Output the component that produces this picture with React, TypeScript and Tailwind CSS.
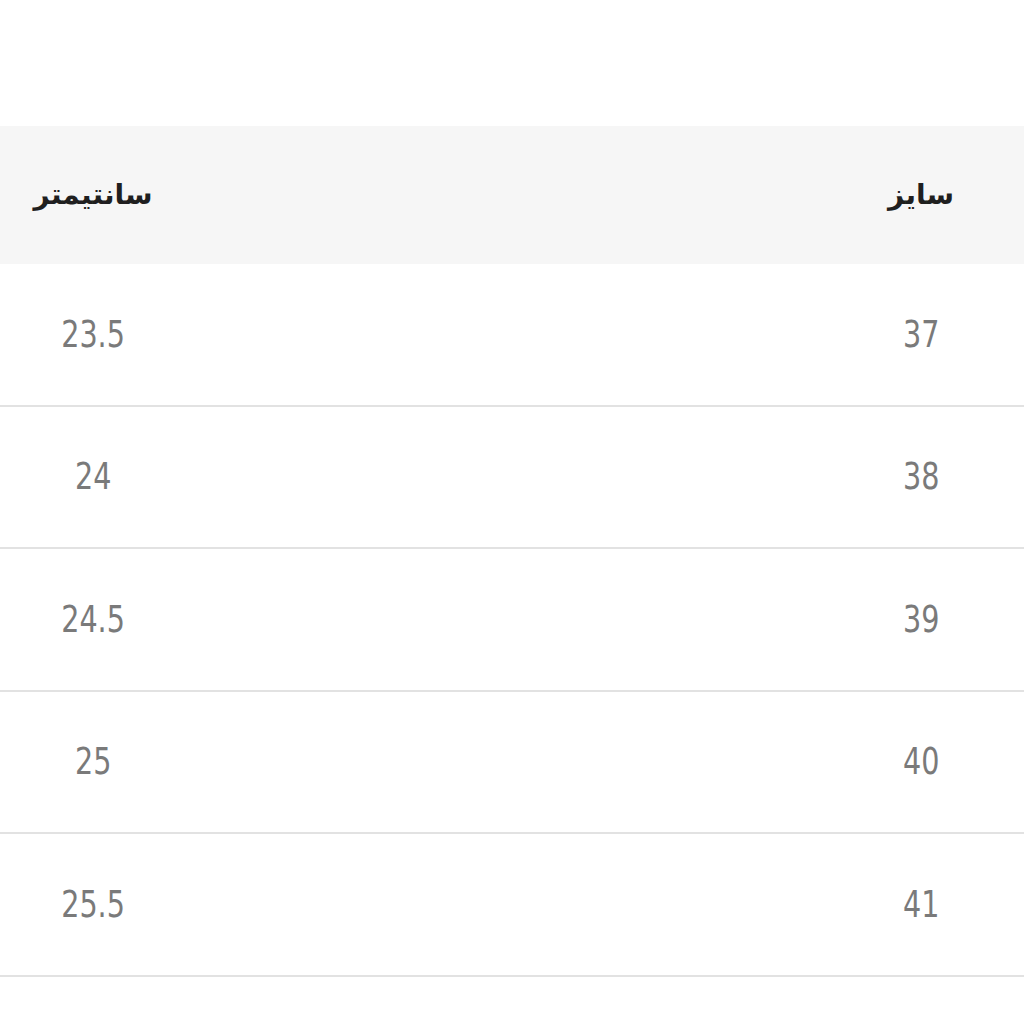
const rows = [
  { size: "37", cm: "23.5" },
  { size: "38", cm: "24" },
  { size: "39", cm: "24.5" },
  { size: "40", cm: "25" },
  { size: "41", cm: "25.5" },
];

export default function App() {
  return (
    <div dir="rtl" className="min-h-screen bg-white pt-[126px]">
      <div className="flex h-[138px] items-center justify-between bg-[#f6f6f6] font-['DejaVu_Sans',sans-serif] text-[28px] font-bold text-[#1f1f1f]">
        <div className="w-[206px] text-center">سایز</div>
        <div className="w-[186px] text-center">سانتیمتر</div>
      </div>
      {rows.map((row) => (
        <div
          key={row.size}
          className="flex h-[142.5px] items-center justify-between border-b-2 border-[#e2e2e2] font-['DejaVu_Sans_Condensed',sans-serif] text-[37px] text-[#7a7a7a]"
        >
          <div className="w-[206px] text-center">
            <span className="inline-block scale-x-[0.86]">{row.size}</span>
          </div>
          <div className="w-[186px] text-center">
            <span className="inline-block scale-x-[0.86]">{row.cm}</span>
          </div>
        </div>
      ))}
    </div>
  );
}
